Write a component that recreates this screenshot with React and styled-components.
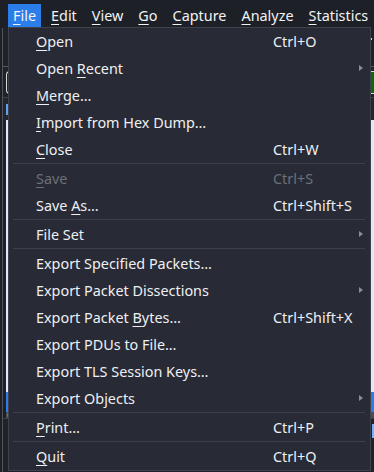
import styled, { createGlobalStyle } from "styled-components";

const GlobalStyle = createGlobalStyle`
  html, body {
    margin: 0;
    padding: 0;
    background: #1e2027;
  }
  body {
    font-family: "Noto Sans", "Open Sans", sans-serif;
  }
`;

const menuBar = [
  { label: "File", key: 0, active: true },
  { label: "Edit", key: 0 },
  { label: "View", key: 0 },
  { label: "Go", key: 0 },
  { label: "Capture", key: 0 },
  { label: "Analyze", key: 0 },
  { label: "Statistics", key: 0 },
];

const fileMenu = [
  { label: "Open", key: 0, shortcut: "Ctrl+O" },
  { label: "Open Recent", key: 5, sub: true },
  { label: "Merge…", key: 0 },
  { label: "Import from Hex Dump…", key: 0 },
  { label: "Close", key: 0, shortcut: "Ctrl+W" },
  { sep: true },
  { label: "Save", key: 0, shortcut: "Ctrl+S", disabled: true },
  { label: "Save As…", key: 5, shortcut: "Ctrl+Shift+S" },
  { sep: true },
  { label: "File Set", sub: true },
  { sep: true },
  { label: "Export Specified Packets…" },
  { label: "Export Packet Dissections", sub: true },
  { label: "Export Packet Bytes…", key: 14, shortcut: "Ctrl+Shift+X" },
  { label: "Export PDUs to File…" },
  { label: "Export TLS Session Keys…" },
  { label: "Export Objects", sub: true },
  { sep: true },
  { label: "Print…", key: 0, shortcut: "Ctrl+P" },
  { sep: true },
  { label: "Quit", key: 0, shortcut: "Ctrl+Q" },
];

const Mnemonic = ({ label, index }) => {
  if (index === undefined) return label;
  return (
    <>
      {label.slice(0, index)}
      <u>{label[index]}</u>
      {label.slice(index + 1)}
    </>
  );
};

const App = () => {
  return (
    <>
      <GlobalStyle />
      <Screen>
        <MenuBar>
          {menuBar.map((m) => (
            <BarItem key={m.label} $active={m.active}>
              <Mnemonic label={m.label} index={m.key} />
            </BarItem>
          ))}
        </MenuBar>

        <Window>
          <Toolbar>
            <Dot />
          </Toolbar>
          <FilterRow>
            <FilterInput />
          </FilterRow>
          <ListHeader>
            <HeaderMark />
          </ListHeader>
          <PacketList />
          <SelectedRow />
          <Scrollbar>
            <Knob />
          </Scrollbar>
          <DetailPane>
            <DetailMark />
          </DetailPane>
        </Window>

        <Dropdown>
          {fileMenu.map((item, i) =>
            item.sep ? (
              <Separator key={i} />
            ) : (
              <Item key={i} $disabled={item.disabled}>
                <Label>
                  <Mnemonic label={item.label} index={item.key} />
                </Label>
                {item.shortcut && <Shortcut>{item.shortcut}</Shortcut>}
                {item.sub && <Arrow />}
              </Item>
            )
          )}
        </Dropdown>
      </Screen>
    </>
  );
};

export default App;

const Screen = styled.div`
  position: relative;
  width: 374px;
  height: 472px;
  overflow: hidden;
  background: #1e2027;
  display: flex;
  flex-direction: column;
  color: #eef0f3;
  font-size: 14.4px;
`;

const MenuBar = styled.div`
  height: 28px;
  display: flex;
  align-items: flex-start;
  padding: 4px 0 0 8px;
  box-sizing: border-box;
  background: #1e2027;

  u {
    text-decoration-thickness: 1px;
    text-underline-offset: 3px;
  }
`;

const BarItem = styled.div`
  height: 23px;
  line-height: 23px;
  padding: 0 5px;
  margin-right: 5px;
  background: ${(p) => (p.$active ? "#2b7de9" : "transparent")};
  color: #f2f3f5;
  white-space: nowrap;
`;

const Window = styled.div`
  flex: 1;
  display: flex;
  flex-direction: column;
  border-left: 1px solid #50535b;
  margin-left: 2px;
`;

const Toolbar = styled.div`
  height: 38px;
  border-bottom: 1px solid #55585f;
  background: #202229;
  position: relative;
`;

const Dot = styled.div`
  position: absolute;
  right: 2px;
  top: 10px;
  width: 2px;
  height: 2px;
  background: #d8d8d8;
`;

const FilterRow = styled.div`
  height: 30px;
  display: flex;
  align-items: center;
  padding: 0 0 0 3px;
  background: #202229;
`;

const FilterInput = styled.div`
  flex: 1;
  height: 21px;
  border: 1px solid #d8d8d8;
  border-right: none;
  border-radius: 4px 0 0 4px;
  background: linear-gradient(to right, #23252c 0 30px, #0a6a0a 30px);
`;

const ListHeader = styled.div`
  height: 22px;
  border-top: 1px solid #3d4047;
  background: #24262d;
  display: flex;
  align-items: center;
  padding-left: 3px;
`;

const HeaderMark = styled.div`
  width: 2px;
  height: 11px;
  background: #5aa4f0;
`;

const PacketList = styled.div`
  height: 272px;
  margin-left: 3px;
  background: #e6e6fb;
`;

const SelectedRow = styled.div`
  height: 20px;
  margin-left: 3px;
  background: #2b7de9;
`;

const Scrollbar = styled.div`
  height: 6px;
  background: #4a4d54;
  margin-left: 3px;
  position: relative;
`;

const Knob = styled.div`
  position: absolute;
  left: 1px;
  top: 0;
  width: 6px;
  height: 6px;
  border-radius: 50%;
  background: #6c6f75;
`;

const DetailPane = styled.div`
  flex: 1;
  background: #202229;
  border-top: 1px solid #3a3d44;
  display: flex;
  justify-content: flex-end;
  align-items: flex-start;
`;

const DetailMark = styled.div`
  width: 2px;
  height: 14px;
  margin-top: 5px;
  background: #6fb4ff;
`;

const Dropdown = styled.div`
  position: absolute;
  left: 8px;
  top: 27px;
  width: 363px;
  box-sizing: border-box;
  background: #282a35;
  border: 1px solid #3f424b;
  display: flex;
  flex-direction: column;

  u {
    text-decoration-thickness: 1px;
    text-underline-offset: 3px;
  }
`;

const Item = styled.div`
  height: 27px;
  display: flex;
  align-items: center;
  position: relative;
  padding-left: 27px;
  color: ${(p) => (p.$disabled ? "#6d7078" : "#eef0f3")};
  white-space: nowrap;
`;

const Label = styled.span`
  width: 237px;
`;

const Shortcut = styled.span``;

const Arrow = styled.span`
  position: absolute;
  right: 7px;
  top: 10px;
  width: 0;
  height: 0;
  border-top: 3.5px solid transparent;
  border-bottom: 3.5px solid transparent;
  border-left: 4px solid #8b8e95;
`;

const Separator = styled.div`
  height: 1px;
  margin: 0 5px 1px 4px;
  background: #3d404b;
`;
